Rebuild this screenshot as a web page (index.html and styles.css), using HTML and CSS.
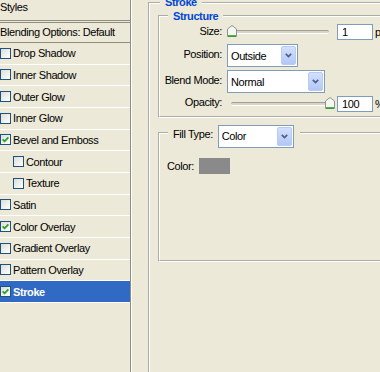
FILE: index.html
```html
<!DOCTYPE html>
<html lang="en">
<head>
    <meta charset="UTF-8">
    <meta name="viewport" content="width=device-width, initial-scale=1.0">
    <title>Layer Style - Stroke</title>
    <link rel="stylesheet" href="styles.css">
</head>
<body>
    <!-- style list -->
    <div class="styles-panel">
        <div class="styles-title">Styles</div>
        <div class="blend-row">Blending Options: Default</div>
        <ul class="style-list">
            <li><span class="check"></span>Drop Shadow</li>
            <li><span class="check"></span>Inner Shadow</li>
            <li><span class="check"></span>Outer Glow</li>
            <li><span class="check"></span>Inner Glow</li>
            <li><span class="check"><svg width="7" height="7" viewBox="0 0 7 7"><path d="M0.6 3.4 L2.6 5.4 L6.4 1.4" fill="none" stroke="#21a121" stroke-width="1.7"/></svg></span>Bevel and Emboss</li>
            <li class="sub"><span class="check"></span>Contour</li>
            <li class="sub"><span class="check"></span>Texture</li>
            <li><span class="check"></span>Satin</li>
            <li><span class="check"><svg width="7" height="7" viewBox="0 0 7 7"><path d="M0.6 3.4 L2.6 5.4 L6.4 1.4" fill="none" stroke="#21a121" stroke-width="1.7"/></svg></span>Color Overlay</li>
            <li><span class="check"></span>Gradient Overlay</li>
            <li><span class="check"></span>Pattern Overlay</li>
            <li class="selected"><span class="check"><svg width="7" height="7" viewBox="0 0 7 7"><path d="M0.6 3.4 L2.6 5.4 L6.4 1.4" fill="none" stroke="#21a121" stroke-width="1.7"/></svg></span>Stroke</li>
        </ul>
    </div>

    <!-- stroke options -->
    <div class="options">
        <fieldset class="group group-main">
            <legend>Stroke</legend>

            <fieldset class="group group-inner structure">
                <legend>Structure</legend>
                <div class="form-grid">
                    <label>Size:</label>
                    <div class="slider-row">
                        <div class="slider">
                            <div class="track"></div>
                            <svg class="thumb" width="10" height="12" viewBox="0 0 10 12"><path d="M0.5 11.5 V4 L5 0.5 L9.5 4 V11.5 Z" fill="#f6f6f2" stroke="#8f928e"/><path d="M1 11 H9" stroke="#21a121" stroke-width="1.6"/></svg>
                        </div>
                        <span class="field">1</span>
                        <span class="unit">px</span>
                    </div>

                    <label>Position:</label>
                    <div class="select select-position">
                        <span>Outside</span>
                        <span class="select-btn"><svg width="7" height="5" viewBox="0 0 7 5"><path d="M0.8 0.8 L3.5 3.6 L6.2 0.8" fill="none" stroke="#4d6185" stroke-width="1.7"/></svg></span>
                    </div>

                    <label>Blend Mode:</label>
                    <div class="select select-blend">
                        <span>Normal</span>
                        <span class="select-btn"><svg width="7" height="5" viewBox="0 0 7 5"><path d="M0.8 0.8 L3.5 3.6 L6.2 0.8" fill="none" stroke="#4d6185" stroke-width="1.7"/></svg></span>
                    </div>

                    <label>Opacity:</label>
                    <div class="slider-row">
                        <div class="slider">
                            <div class="track"></div>
                            <svg class="thumb thumb-end" width="10" height="12" viewBox="0 0 10 12"><path d="M0.5 11.5 V4 L5 0.5 L9.5 4 V11.5 Z" fill="#f6f6f2" stroke="#8f928e"/><path d="M1 11 H9" stroke="#21a121" stroke-width="1.6"/></svg>
                        </div>
                        <span class="field">100</span>
                        <span class="unit">%</span>
                    </div>
                </div>
            </fieldset>

            <fieldset class="group group-inner fill-group">
                <legend>
                    <span class="fill-label">Fill Type:</span>
                    <span class="select select-fill">
                        <span>Color</span>
                        <span class="select-btn"><svg width="7" height="5" viewBox="0 0 7 5"><path d="M0.8 0.8 L3.5 3.6 L6.2 0.8" fill="none" stroke="#4d6185" stroke-width="1.7"/></svg></span>
                    </span>
                </legend>
                <div class="fill-body">
                    <span>Color:</span>
                    <span class="swatch"></span>
                </div>
            </fieldset>
        </fieldset>
    </div>
</body>
</html>
```

FILE: styles.css
```css
body {
    margin: 0;
    height: 372px;
    overflow: hidden;
    display: flex;
    background-color: #ece9d8;
    font-family: "Liberation Sans", Arial, sans-serif;
    font-size: 11px;
    letter-spacing: -0.4px;
    color: #000;
}

/* style list */
.styles-panel {
    width: 130px;
    flex-shrink: 0;
    border-right: 1px solid #8f8c80;
    box-shadow: 1px 0 #fff;
}
.styles-title {
    height: 20px;
    line-height: 14px;
    border-bottom: 3px double #8f8c80;
}
.blend-row {
    height: 19px;
    line-height: 19px;
    border-bottom: 1px solid #8f8c80;
}
.style-list {
    list-style: none;
    margin: 0;
    padding: 0;
}
.style-list li {
    display: flex;
    align-items: center;
    height: 20.67px;
    border-bottom: 1px solid #fff;
}
.style-list li.sub {
    padding-left: 13px;
}
.style-list li.selected {
    background-color: #316ac5;
    color: #fff;
    font-weight: bold;
}
.check {
    display: flex;
    align-items: center;
    justify-content: center;
    flex-shrink: 0;
    width: 9px;
    height: 9px;
    margin-right: 2px;
    border: 1px solid #1c5180;
    background: linear-gradient(135deg, #dcdcd7, #fff);
}

/* option groups */
.options {
    flex: 1;
    padding-left: 17px;
}
.group {
    margin: 0;
    padding: 0;
    min-width: 0;
    border: 2px groove #fff;
}
.group > legend {
    padding: 0 5px;
    color: #0046d5;
    font-weight: bold;
}
.group-main {
    width: 300px;
    height: 400px;
    margin-top: -4px;
}
.group-main > legend {
    margin-left: 10px;
    padding-bottom: 2px;
    line-height: 12px;
}
.group-inner {
    margin-left: 8px;
}
.group-inner > legend {
    margin-left: 8px;
    line-height: 14px;
}
.structure {
    margin-top: -1px;
}

.form-grid {
    display: grid;
    grid-template-columns: 62px auto;
    grid-template-rows: 18px 29px 23px 21px;
    column-gap: 5px;
    align-items: center;
    padding-bottom: 2px;
}
.form-grid label {
    justify-self: end;
    line-height: 13px;
    padding-bottom: 2px;
}
.slider-row {
    display: flex;
    align-items: center;
}
.slider {
    position: relative;
    width: 106px;
    height: 14px;
    margin-right: 4px;
}
.track {
    height: 2px;
    margin: 5px 4px 0 4px;
    background-color: #d8d5c8;
    border-top: 1px solid #a19e92;
    border-bottom: 1px solid #fff;
    border-radius: 2px;
}
.thumb {
    position: absolute;
    top: 0;
    left: 0;
}
.thumb-end {
    left: 98px;
}
.field {
    width: 36px;
    height: 16px;
    box-sizing: border-box;
    padding-left: 4px;
    line-height: 14px;
    border: 1px solid #7f9db9;
    background-color: #fff;
}
.unit {
    margin-left: 2px;
}

.select {
    display: flex;
    align-items: center;
    justify-content: space-between;
    height: 23px;
    box-sizing: border-box;
    padding: 1px 1px 1px 3px;
    border: 1px solid #7f9db9;
    background-color: #fff;
    color: #000;
    font-weight: normal;
    justify-self: start;
}
.select-position {
    width: 71px;
}
.select-blend {
    width: 98px;
}
.select-fill {
    width: 76px;
}
.select-btn {
    display: flex;
    align-items: center;
    justify-content: center;
    width: 15px;
    height: 19px;
    box-sizing: border-box;
    border: 1px solid #b9cbf3;
    border-radius: 2px;
    background: linear-gradient(#d3e0fd, #b3c7f5);
}

/* fill type */
.fill-group > legend {
    display: flex;
    gap: 5px;
    padding: 7px 6px 0 5px;
    line-height: 13px;
    color: #000;
    font-weight: normal;
}
.fill-label {
    padding-top: 3px;
}
.fill-body {
    display: flex;
    align-items: center;
    gap: 5px;
    height: 112px;
    box-sizing: border-box;
    padding: 10px 0 0 7px;
    align-items: flex-start;
}
.fill-body span:first-child {
    line-height: 16px;
}
.swatch {
    width: 31px;
    height: 16px;
    background-color: #8a8a8a;
}
```
